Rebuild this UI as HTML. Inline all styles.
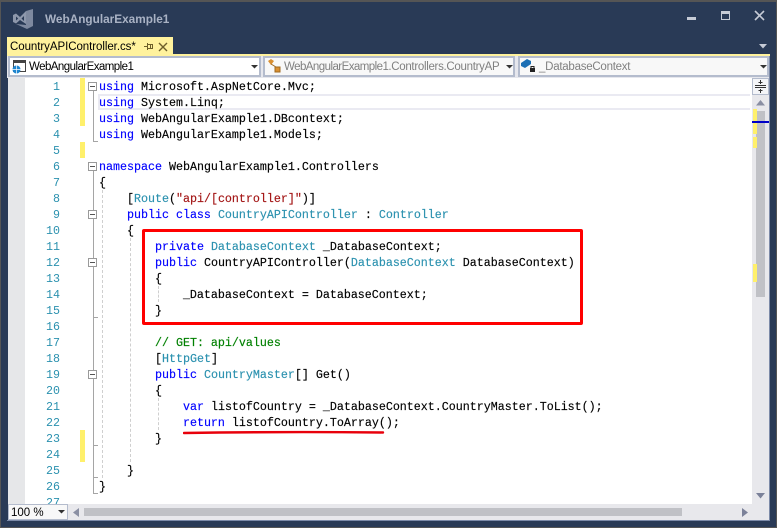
<!DOCTYPE html>
<html><head><meta charset="utf-8">
<style>
html,body{margin:0;padding:0;width:777px;height:528px;overflow:hidden;background:#293a56}
*{box-sizing:border-box}
.a{position:absolute}
.ui{font-family:"Liberation Sans",sans-serif;font-size:11.5px;white-space:nowrap}
.l{position:absolute;left:99px;height:16px;line-height:18px;font-family:"Liberation Mono",monospace;font-size:11.67px;color:#000;white-space:pre;-webkit-text-stroke:.15px #000}
.n{position:absolute;left:25px;width:35px;height:16px;line-height:18px;text-align:right;font-family:"Liberation Mono",monospace;font-size:11.67px;color:#2b91af}
.k{color:#00f;-webkit-text-stroke:.15px #00f}.t{color:#2b91af;-webkit-text-stroke:.15px #2b91af}.s{color:#a31515;-webkit-text-stroke:.15px #a31515}.c{color:#008000;-webkit-text-stroke:.15px #008000}
.b{position:absolute;left:88px;width:9px;height:9px;border:1px solid #9a9a9a;background:#fff}
.b:after{content:"";position:absolute;left:1px;top:3px;width:5px;height:1px;background:#555}
.g{position:absolute;width:0;border-left:1px dashed #cfcfcf}
.o{position:absolute;left:93px;width:1px;background:#a5a5a5}
.tk{position:absolute;left:93px;width:5px;height:1px;background:#a5a5a5}
.y{position:absolute;background:#fff06b}
.dd{position:absolute;top:56px;height:21px;background:#f8f8f8;border:2px solid #b4bccd}
</style></head>
<body>
<div class="a" style="left:0;top:0;width:777px;height:2px;background:#555"></div>
<div class="a" style="left:0;top:0;width:1px;height:528px;background:#555"></div>
<div class="a" style="left:776px;top:0;width:1px;height:528px;background:#555"></div>
<div class="a" style="left:0;top:527px;width:777px;height:1px;background:#555"></div>

<svg class="a" style="left:13px;top:9px" width="21" height="20" viewBox="0 0 21 20">
<path d="M13 2 L20 0 L20 17 L14 20 L3 15 L13 16 Z" fill="#7e899f"/>
<path d="M0 6 L3 4.5 L7 8 L13 2 L13 15 L7 11 L3 14.5 L0 13 Z M3 7.5 L3 11.5 L5.2 9.5 Z M8.5 9.5 L11 12 L11 7 Z" fill="#8d97ab" fill-rule="evenodd"/>
</svg>
<div class="a ui" style="left:45px;top:11px;font-size:11.8px;font-weight:bold;color:#a9b2c4;line-height:16px">WebAngularExample1</div>

<div class="a" style="left:687px;top:17px;width:9px;height:3px;background:#c6cbd6"></div>
<div class="a" style="left:721px;top:11px;width:9px;height:9px;border:1px solid #c6cbd6;border-top-width:3px"></div>
<svg class="a" style="left:754px;top:10px" width="11" height="11" viewBox="0 0 11 11"><path d="M1 1 L10 10 M10 1 L1 10" stroke="#c6cbd6" stroke-width="1.6"/></svg>
<svg class="a" style="left:759px;top:44px" width="9" height="5"><path d="M0 0 H8 L4 4.5 Z" fill="#c6cbd6"/></svg>

<div class="a" style="left:7px;top:37px;width:166px;height:18px;background:#fff29d"></div>
<div class="a" style="left:7px;top:54px;width:763px;height:2px;background:#fff29d"></div>
<div class="a ui" style="left:10px;top:39px;letter-spacing:-.06px;line-height:16px;color:#000">CountryAPIController.cs*</div>
<svg class="a" style="left:144px;top:41px" width="10" height="10" viewBox="0 0 10 10"><path d="M0 5.5 H3 M3.5 2 V9 M3.5 3.5 H8.5 V7.5 H3.5 M6.5 3.5 V7.5" stroke="#6d5f2a" stroke-width="1" fill="none"/></svg>
<svg class="a" style="left:158px;top:42px" width="10" height="10" viewBox="0 0 10 10"><path d="M1 1 L9 9 M9 1 L1 9" stroke="#6d5f2a" stroke-width="1.4"/></svg>

<div class="a" style="left:7px;top:56px;width:763px;height:22px;background:#e6e7ed"></div>
<div class="dd" style="left:8px;width:253px;background:#fff"></div>
<svg class="a" style="left:11px;top:58px" width="16" height="17" viewBox="0 0 16 17"><rect x="2.5" y="2.5" width="12" height="11" fill="#fff" stroke="#444"/><rect x="2" y="2" width="13" height="3" fill="#444"/><circle cx="5.5" cy="11.5" r="4" fill="#1d85d0"/><path d="M1.5 11.5 H9.5 M5.5 7.5 V15.5" stroke="#fff" stroke-width=".7"/></svg>
<div class="a ui" style="left:29px;top:59px;letter-spacing:-.55px;line-height:16px;color:#000">WebAngularExample1</div>
<svg class="a" style="left:251px;top:65px" width="8" height="4"><path d="M0 0 H7 L3.5 3.5 Z" fill="#333"/></svg>

<div class="dd" style="left:263px;width:252px"></div>
<svg class="a" style="left:266px;top:58px" width="16" height="16" viewBox="0 0 16 16"><path d="M2 3 L5 1 L8 3 L5 7 Z" fill="#d98f31"/><path d="M9 9 H14 V14 H9 Z M5 6 L10 9" fill="#d98f31" stroke="#a06a20"/></svg>
<div class="a ui" style="left:284px;top:59px;line-height:16px;color:#808080"><span style="letter-spacing:-.55px">WebAngularExample1</span><span style="letter-spacing:-.3px">.Controllers.CountryAP</span></div>
<svg class="a" style="left:506px;top:65px" width="8" height="4"><path d="M0 0 H7 L3.5 3.5 Z" fill="#333"/></svg>

<div class="dd" style="left:518px;width:251px"></div>
<svg class="a" style="left:521px;top:58px" width="18" height="16" viewBox="0 0 18 16"><path d="M0 5 L6 1 L10 3 L10 6 L4 10 L0 8 Z" fill="#1b6fb5"/><rect x="9" y="10" width="5" height="4" fill="#222"/><path d="M10 10 V8.5 H13 V10" stroke="#222" fill="none"/></svg>
<div class="a ui" style="left:539px;top:59px;letter-spacing:-.25px;line-height:16px;color:#808080">_DatabaseContext</div>
<svg class="a" style="left:760px;top:65px" width="8" height="4"><path d="M0 0 H7 L3.5 3.5 Z" fill="#333"/></svg>

<!-- editor -->
<div class="a" style="left:8px;top:78px;width:744px;height:426px;background:#fff;overflow:hidden"></div>
<div class="a" style="left:8px;top:78px;width:17px;height:426px;background:#e6e7e9"></div>
<div class="a" style="left:98px;top:94px;width:652px;height:16px;border:2px solid #eaeaf2;border-right:0"></div>

<div class="y" style="left:80px;top:78px;width:5px;height:48px"></div>
<div class="y" style="left:80px;top:142px;width:5px;height:16px"></div>
<div class="y" style="left:80px;top:430px;width:5px;height:32px"></div>

<div class="o" style="top:90px;height:52px"></div><div class="tk" style="top:141px"></div>
<div class="o" style="top:170px;height:323px"></div>
<div class="tk" style="top:317px"></div><div class="tk" style="top:445px"></div><div class="tk" style="top:477px"></div><div class="tk" style="top:493px"></div>
<div class="b" style="top:82px"></div><div class="b" style="top:162px"></div><div class="b" style="top:210px"></div><div class="b" style="top:258px"></div><div class="b" style="top:370px"></div>

<div class="g" style="left:102px;top:190px;height:288px"></div>
<div class="g" style="left:130px;top:238px;height:224px"></div>
<div class="g" style="left:158px;top:286px;height:16px"></div>
<div class="g" style="left:158px;top:398px;height:32px"></div>

<div class="n" style="top:78px">1</div><div class="n" style="top:94px">2</div><div class="n" style="top:110px">3</div><div class="n" style="top:126px">4</div><div class="n" style="top:142px">5</div><div class="n" style="top:158px">6</div><div class="n" style="top:174px">7</div><div class="n" style="top:190px">8</div><div class="n" style="top:206px">9</div><div class="n" style="top:222px">10</div><div class="n" style="top:238px">11</div><div class="n" style="top:254px">12</div><div class="n" style="top:270px">13</div><div class="n" style="top:286px">14</div><div class="n" style="top:302px">15</div><div class="n" style="top:318px">16</div><div class="n" style="top:334px">17</div><div class="n" style="top:350px">18</div><div class="n" style="top:366px">19</div><div class="n" style="top:382px">20</div><div class="n" style="top:398px">21</div><div class="n" style="top:414px">22</div><div class="n" style="top:430px">23</div><div class="n" style="top:446px">24</div><div class="n" style="top:462px">25</div><div class="n" style="top:478px">26</div>
<div class="a" style="left:25px;top:494px;width:35px;height:10px;overflow:hidden"><div class="n" style="left:0;top:0">27</div></div>

<div class="l" style="top:78px"><span class="k">using</span> Microsoft.AspNetCore.Mvc;</div>
<div class="l" style="top:94px"><span class="k">using</span> System.Linq;</div>
<div class="l" style="top:110px"><span class="k">using</span> WebAngularExample1.DBcontext;</div>
<div class="l" style="top:126px"><span class="k">using</span> WebAngularExample1.Models;</div>
<div class="l" style="top:158px"><span class="k">namespace</span> WebAngularExample1.Controllers</div>
<div class="l" style="top:174px">{</div>
<div class="l" style="top:190px">    [<span class="t">Route</span>(<span class="s">"api/[controller]"</span>)]</div>
<div class="l" style="top:206px">    <span class="k">public class</span> <span class="t">CountryAPIController</span> : <span class="t">Controller</span></div>
<div class="l" style="top:222px">    {</div>
<div class="l" style="top:238px">        <span class="k">private</span> <span class="t">DatabaseContext</span> _DatabaseContext;</div>
<div class="l" style="top:254px">        <span class="k">public</span> CountryAPIController(<span class="t">DatabaseContext</span> DatabaseContext)</div>
<div class="l" style="top:270px">        {</div>
<div class="l" style="top:286px">            _DatabaseContext = DatabaseContext;</div>
<div class="l" style="top:302px">        }</div>
<div class="l" style="top:334px">        <span class="c">// GET: api/values</span></div>
<div class="l" style="top:350px">        [<span class="t">HttpGet</span>]</div>
<div class="l" style="top:366px">        <span class="k">public</span> <span class="t">CountryMaster</span>[] Get()</div>
<div class="l" style="top:382px">        {</div>
<div class="l" style="top:398px">            <span class="k">var</span> listofCountry = _DatabaseContext.CountryMaster.ToList();</div>
<div class="l" style="top:414px">            <span class="k">return</span> listofCountry.ToArray();</div>
<div class="l" style="top:430px">        }</div>
<div class="l" style="top:462px">    }</div>
<div class="l" style="top:478px">}</div>

<div class="a" style="left:142px;top:229px;width:441px;height:96px;border:3px solid #f00;border-radius:2px"></div>
<svg class="a" style="left:183px;top:429px" width="202" height="7"><path d="M1 4 Q100 2.5 200 3.5" stroke="#e8000b" stroke-width="2.4" fill="none" stroke-linecap="round"/></svg>

<!-- vertical scrollbar -->
<div class="a" style="left:752px;top:78px;width:17px;height:426px;background:#e8e8ec"></div>
<div class="a" style="left:752px;top:78px;width:17px;height:17px;background:#f4f5f8;border:1px solid #b4bccd"></div>
<svg class="a" style="left:754px;top:79px" width="13" height="15" viewBox="0 0 13 15" shape-rendering="crispEdges"><path d="M1 6.5 H12 M1 8.5 H12" stroke="#333"/><path d="M6.5 1 V5 M6.5 10 V14" stroke="#333"/><path d="M4.5 3.5 H8.5 M4.5 11.5 H8.5" stroke="#333"/></svg>
<svg class="a" style="left:756px;top:100px" width="10" height="6"><path d="M4.5 0 L9 5.5 H0 Z" fill="#8a8fa3"/></svg>
<div class="a" style="left:756px;top:111px;width:9px;height:186px;background:#c0c1c6"></div>
<div class="y" style="left:753px;top:109px;width:4px;height:25px"></div>
<div class="y" style="left:753px;top:137px;width:4px;height:11px"></div>
<div class="y" style="left:753px;top:264px;width:4px;height:18px"></div>
<div class="a" style="left:752px;top:121px;width:17px;height:2px;background:#0000c8"></div>
<svg class="a" style="left:756px;top:493px" width="10" height="6"><path d="M0 0 H9 L4.5 5.5 Z" fill="#7b8199"/></svg>

<!-- bottom -->
<div class="a" style="left:8px;top:504px;width:761px;height:16px;background:#e8e8ec"></div>
<div class="a" style="left:8px;top:504px;width:60px;height:16px;background:#f8f8f8;border:1px solid #b4bccd"></div>
<div class="a ui" style="left:11px;top:506px;line-height:15px;color:#000">100 %</div>
<svg class="a" style="left:58px;top:510px" width="8" height="4"><path d="M0 0 H7 L3.5 3.5 Z" fill="#333"/></svg>
<svg class="a" style="left:73px;top:508px" width="7" height="9"><path d="M6 0 V9 L0 4.5 Z" fill="#8a8fa3"/></svg>
<div class="a" style="left:84px;top:508px;width:598px;height:8px;background:#c0c1c6"></div>
<svg class="a" style="left:742px;top:508px" width="7" height="9"><path d="M0 0 V9 L6 4.5 Z" fill="#7b8199"/></svg>
<div class="a" style="left:7px;top:520px;width:763px;height:1px;background:#7c8aa8"></div>
<div class="a" style="left:769px;top:56px;width:1px;height:465px;background:#7c8aa8"></div>
</body></html>
